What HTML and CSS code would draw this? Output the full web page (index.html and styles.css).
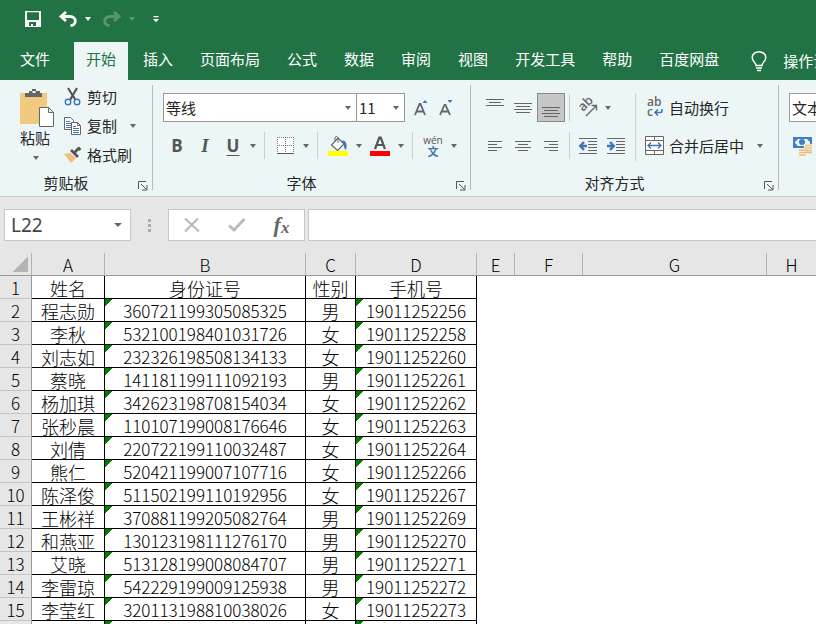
FILE: index.html
```
<!DOCTYPE html>
<html lang="zh-CN">
    <head>
        <meta charset="utf-8">
        <title>工作簿</title>
        <link rel="stylesheet" href="styles.css">
    </head>
    <body>
        <div class="quick">
            <button class="q-save" aria-label="保存">
                <svg width="16" height="16" viewBox="0 0 16 16"><path d="M0 0h16v16H0zM2 1.300v7.700h12V1.300zM4 11v4h2v-2h2v2h3v-4z" fill="#fff" fill-rule="evenodd"/></svg>
            </button>
            <button class="q-undo" aria-label="撤消">
                <svg width="18" height="16" viewBox="0 0 18 16"><path d="M7 1L2 5.500L7 10M2 5.500h9c7 0 7 9 .5 9" fill="none" stroke="#fff" stroke-width="2.800"/></svg>
                <i class="caret"></i>
            </button>
            <button class="q-redo" aria-label="恢复">
                <svg width="18" height="16" viewBox="0 0 18 16"><path d="M11 1l5 4.500L11 10M16 5.500H7c-7 0-7 9-.5 9" fill="none" stroke="#fff" stroke-width="2.800"/></svg>
                <i class="caret"></i>
            </button>
            <button class="q-more" aria-label="自定义">
                <svg width="6" height="7" viewBox="0 0 6 7"><path d="M.5 0h5v1.200h-5zM0 3h6L3 6.200z" fill="#fff"/></svg>
            </button>
        </div>

        <nav class="tabs">
            <a class="file" href="#">文件</a>
            <a class="active" href="#">开始</a>
            <a href="#">插入</a>
            <a href="#">页面布局</a>
            <a href="#">公式</a>
            <a href="#">数据</a>
            <a href="#">审阅</a>
            <a href="#">视图</a>
            <a href="#">开发工具</a>
            <a href="#">帮助</a>
            <a href="#">百度网盘</a>
            <a class="tell" href="#">
                <svg width="16" height="21" viewBox="0 0 16 21"><path d="M5 14.500c0-3-3.800-4-3.800-8a6.800 5.800 0 0 1 13.600 0c0 4-3.800 5-3.800 8zM5 17h6M6 19.500h4" fill="none" stroke="#fff" stroke-width="1.500"/></svg>
                操作说明搜索
            </a>
        </nav>

        <div class="ribbon">
            <!-- 剪贴板 -->
            <section class="group clipboard">
                <div class="tools">
                    <button class="paste">
                        <svg width="34" height="38" viewBox="0 0 34 38"><path d="M0 4h27v31H0z" fill="#f0cb7e"/><path d="M5 4h4V2h3V0h4v2h4v2h2v4H5z" fill="#666"/><path d="M12.500 2h3v2h-3z" fill="#edf6f7"/><path d="M19.500 18.500h9l5 5v14h-14z" fill="#fff" stroke="#666"/><path d="M28.500 18.500v5h5" fill="none" stroke="#666"/></svg>
                        <span>粘贴</span>
                        <i class="caret"></i>
                    </button>
                    <div class="list">
                        <button>
                            <svg width="18" height="18" viewBox="0 0 18 18"><path d="M4 0l7.500 12M13 0L6 12" stroke="#555" stroke-width="2.200"/><g fill="none" stroke="#3f74b5" stroke-width="1.400"><circle cx="4" cy="14" r="2.800"/><circle cx="13" cy="14" r="2.800"/></g></svg>
                            剪切
                        </button>
                        <button>
                            <svg width="18" height="18" viewBox="0 0 18 18"><path d="M.5.500h6l3 3v9h-9z" fill="#fff" stroke="#666"/><path d="M2 4.500h4M2 6.500h5M2 8.500h5M2 10.500h5" stroke="#3f74b5"/><path d="M7.500 5.500h6l3 3v9h-9z" fill="#fff" stroke="#666"/><path d="M13.500 5.500v3h3" fill="none" stroke="#666"/><path d="M9 9.500h3M9 11.500h6M9 13.500h6M9 15.500h6" stroke="#3f74b5"/></svg>
                            复制
                            <i class="caret"></i>
                        </button>
                        <button>
                            <svg width="18" height="18" viewBox="0 0 18 18"><path d="M0 8l6-1 6 5-5 5z" fill="#f0c078"/><path d="M7 4l7 7M15 2l-4 4" stroke="#555" stroke-width="2.800"/><path d="M14 1.500l2.500 2.500" stroke="#555" stroke-width="2.500"/></svg>
                            格式刷
                        </button>
                    </div>
                </div>
                <div class="caption">
                    <span>剪贴板</span>
                    <button aria-label="剪贴板设置"><svg width="10" height="10" viewBox="0 0 10 10"><path d="M.5 8V.500H8M3 3l5.500 5.500M4 9h5V4" fill="none" stroke="#555"/></svg></button>
                </div>
            </section>

            <!-- 字体 -->
            <section class="group font">
                <div class="tools">
                    <div class="row">
                        <label class="combo family"><select aria-label="字体"><option>等线</option></select><i class="caret"></i></label>
                        <label class="combo size"><select aria-label="字号"><option>11</option></select><i class="caret"></i></label>
                        <button class="tool grow" aria-label="增大字号">
                            <svg width="16" height="18" viewBox="0 0 16 18"><path d="M1 16L5.500 5h1L11 16M3 12.500h6" fill="none" stroke="#666" stroke-width="1.800"/><path d="M8.500 4L11 1l2.500 3z" fill="#3f74b5"/></svg>
                        </button>
                        <button class="tool" aria-label="减小字号">
                            <svg width="16" height="18" viewBox="0 0 16 18"><path d="M1 16L5.500 6h1L11 16M3 12.500h6" fill="none" stroke="#666" stroke-width="1.800"/><path d="M8.500 1h5L11 4z" fill="#3f74b5"/></svg>
                        </button>
                    </div>
                    <div class="row">
                        <button class="tool letter bold">B</button>
                        <button class="tool letter italic">I</button>
                        <button class="tool letter under">U</button>
                        <button class="drop" aria-label="下划线样式"><i class="caret"></i></button>
                        <i class="sep"></i>
                        <button class="tool wide" aria-label="边框">
                            <svg width="17" height="17" viewBox="0 0 17 17"><path d="M0 0h17v17H0z" fill="#fff"/><path d="M0 .5h17M0 8.500h17M.5 0v16M8.500 0v16M16.500 0v16" stroke="#777" stroke-dasharray="1 1"/><path d="M0 16.500h17" stroke="#555"/></svg>
                        </button>
                        <button class="drop" aria-label="边框样式"><i class="caret"></i></button>
                        <i class="sep"></i>
                        <button class="tool wide" aria-label="填充颜色">
                            <svg width="20" height="20" viewBox="0 0 20 20"><path d="M10 2l6 6-6.500 6.500L3.500 9z" fill="#fff" stroke="#666" stroke-width="1.200"/><path d="M7 5V1.500Q8.500-.5 10 1.500V7" fill="none" stroke="#666"/><path d="M13.500 4.500c5-.5 6 4 4.500 9.500-1.500-1-2.500-3-2-6z" fill="#3f74b5"/><path d="M0 15h20v5H0z" fill="#ff0"/></svg>
                        </button>
                        <button class="drop" aria-label="选择填充颜色"><i class="caret"></i></button>
                        <button class="tool wide" aria-label="字体颜色">
                            <svg width="20" height="20" viewBox="0 0 20 20"><path d="M5 13L9.300 1.500h1.400L15 13M6.500 9h7" fill="none" stroke="#555" stroke-width="2.200"/><path d="M0 15h20v5H0z" fill="#f00"/></svg>
                        </button>
                        <button class="drop" aria-label="选择字体颜色"><i class="caret"></i></button>
                        <i class="sep"></i>
                        <button class="tool wide pinyin"><span>wén</span><b>文</b></button>
                        <button class="drop" aria-label="拼音选项"><i class="caret"></i></button>
                    </div>
                </div>
                <div class="caption">
                    <span>字体</span>
                    <button aria-label="字体设置"><svg width="10" height="10" viewBox="0 0 10 10"><path d="M.5 8V.500H8M3 3l5.500 5.500M4 9h5V4" fill="none" stroke="#555"/></svg></button>
                </div>
            </section>

            <!-- 对齐方式 -->
            <section class="group align">
                <div class="tools">
                    <div class="left">
                        <div class="row">
                            <button class="tool" aria-label="顶端对齐"><svg width="18" height="18" viewBox="0 0 18 18"><path d="M0 .500h18M3 3.500h12M0 6.500h18" stroke="#666"/></svg></button>
                            <button class="tool" aria-label="垂直居中"><svg width="18" height="18" viewBox="0 0 18 18"><path d="M0 4.500h18M2 7.500h14M0 10.500h18M2 13.500h14" stroke="#666"/></svg></button>
                            <button class="tool on" aria-label="底端对齐"><svg width="18" height="18" viewBox="0 0 18 18"><path d="M0 8.500h18M2 11.500h14M0 14.500h18M2 17.500h14" stroke="#666"/></svg></button>
                            <i class="sep"></i>
                            <button class="tool" aria-label="方向"><svg width="20" height="20" viewBox="0 0 20 20"><text x="0" y="0" transform="translate(5 14) rotate(-45)" font-size="13" font-weight="600" fill="#666">ab</text><path d="M8 18L18 8M13.500 7.500h5v5" fill="none" stroke="#666" stroke-width="1.400"/></svg></button>
                            <button class="drop" aria-label="方向选项"><i class="caret"></i></button>
                        </div>
                        <div class="row">
                            <button class="tool" aria-label="左对齐"><svg width="14" height="12" viewBox="0 0 14 12"><path d="M0 1.500h14M0 4.500h9M0 7.500h14M0 10.500h9" stroke="#666"/></svg></button>
                            <button class="tool" aria-label="居中"><svg width="16" height="12" viewBox="0 0 16 12"><path d="M0 1.500h16M3 4.500h10M0 7.500h16M3 10.500h10" stroke="#666"/></svg></button>
                            <button class="tool" aria-label="右对齐"><svg width="14" height="12" viewBox="0 0 14 12"><path d="M0 1.500h14M5 4.500h9M0 7.500h14M5 10.500h9" stroke="#666"/></svg></button>
                            <i class="sep"></i>
                            <button class="tool" aria-label="减少缩进"><svg width="18" height="16" viewBox="0 0 18 16"><path d="M0 .5h18M9 3.500h9M9 6.500h9M9 9.500h9M9 12.500h9M0 15.500h18" stroke="#666"/><path d="M8 8H2M5 4L1.200 8 5 12" fill="none" stroke="#3f74b5" stroke-width="2.400"/></svg></button>
                            <button class="tool" aria-label="增加缩进"><svg width="18" height="16" viewBox="0 0 18 16"><path d="M0 .5h18M9 3.500h9M9 6.500h9M9 9.500h9M9 12.500h9M0 15.500h18" stroke="#666"/><path d="M0 8h6M3 4l3.800 4L3 12" fill="none" stroke="#3f74b5" stroke-width="2.400"/></svg></button>
                        </div>
                    </div>
                    <i class="sep tall"></i>
                    <div class="right">
                        <button class="row wrap">
                            <svg width="20" height="20" viewBox="0 0 20 20"><text x="2" y="8" font-size="12" font-weight="600" fill="#666">ab</text><text x="2" y="18" font-size="12" font-weight="600" fill="#666">c</text><path d="M17 11v2q0 1.500-1.500 1.500H10M13 11.500l-3 3 3 3" fill="none" stroke="#3f74b5" stroke-width="1.600"/></svg>
                            自动换行
                        </button>
                        <button class="row">
                            <svg width="20" height="20" viewBox="0 0 20 20"><path d="M.5.500h18v18H.5z" fill="#fff" stroke="#666"/><path d="M0 4.500h19M0 14.500h19M9.500 0v4M9.500 15v4" stroke="#666"/><path d="M3 9.500h13M6 6.500l-3 3 3 3M13 6.500l3 3-3 3" fill="none" stroke="#3f74b5" stroke-width="1.300"/></svg>
                            合并后居中
                            <i class="caret"></i>
                        </button>
                    </div>
                </div>
                <div class="caption">
                    <span>对齐方式</span>
                    <button aria-label="对齐设置"><svg width="10" height="10" viewBox="0 0 10 10"><path d="M.5 8V.500H8M3 3l5.500 5.500M4 9h5V4" fill="none" stroke="#555"/></svg></button>
                </div>
            </section>

            <!-- 数字 -->
            <section class="group number">
                <div class="tools">
                    <div class="row">
                        <label class="combo format"><select aria-label="数字格式"><option>文本</option></select></label>
                    </div>
                    <div class="row">
                        <button class="tool money" aria-label="会计数字格式"><svg width="20" height="20" viewBox="0 0 20 20"><path d="M0 1h19v11H0z" fill="#3f7fc1"/><path d="M2 3h15v7H2z" fill="#edf6f7"/><path d="M2 3h3L2 6zM17 3h-3l3 3zM2 10h3L2 7z" fill="#3f7fc1"/><circle cx="9" cy="6" r="3" fill="#3f7fc1"/><path d="M11 8h8v10h-4v2H6v-7h5z" fill="#edf6f7"/><path d="M12 9.500h7M12 12h7M12 14.500h7M6 14h7M6 16.500h13M6 19h7" stroke="#efbd74" stroke-width="1.700"/></svg></button>
                    </div>
                </div>
            </section>
        </div>

        <div class="formula">
            <label class="name"><input type="text" value="L22" aria-label="名称框"><i class="caret"></i></label>
            <svg class="dots" width="3" height="13" viewBox="0 0 3 13"><path d="M0 0h3v3H0zM0 5h3v3H0zM0 10h3v3H0z" fill="#aaa"/></svg>
            <div class="actions">
                <button aria-label="取消"><svg width="16" height="14" viewBox="0 0 16 14"><path d="M1 .5l14 13M14 .5L1 13.500" stroke="#bbb" stroke-width="2.200"/></svg></button>
                <button aria-label="输入"><svg width="18" height="14" viewBox="0 0 18 14"><path d="M1 7.500l5 4.500L16.500 1" fill="none" stroke="#bbb" stroke-width="3"/></svg></button>
                <button class="fx" aria-label="插入函数"><em>f</em><em class="x">x</em></button>
            </div>
            <input class="edit" type="text" aria-label="编辑栏">
        </div>

        <table class="sheet">
            <colgroup>
                <col class="c-no"><col class="c-a"><col class="c-b"><col class="c-c"><col class="c-d"><col class="c-e"><col class="c-f"><col class="c-g"><col>
            </colgroup>
            <thead>
                <tr><th class="corner"></th><th>A</th><th>B</th><th>C</th><th>D</th><th>E</th><th>F</th><th>G</th><th>H</th></tr>
            </thead>
            <tbody>
                <tr><th>1</th><td>姓名</td><td>身份证号</td><td>性别</td><td>手机号</td></tr>
                <tr><th>2</th><td>程志勋</td><td class="t">360721199305085325</td><td>男</td><td class="t">19011252256</td></tr>
                <tr><th>3</th><td>李秋</td><td class="t">532100198401031726</td><td>女</td><td class="t">19011252258</td></tr>
                <tr><th>4</th><td>刘志如</td><td class="t">232326198508134133</td><td>女</td><td class="t">19011252260</td></tr>
                <tr><th>5</th><td>蔡晓</td><td class="t">141181199111092193</td><td>男</td><td class="t">19011252261</td></tr>
                <tr><th>6</th><td>杨加琪</td><td class="t">342623198708154034</td><td>女</td><td class="t">19011252262</td></tr>
                <tr><th>7</th><td>张秒晨</td><td class="t">110107199008176646</td><td>女</td><td class="t">19011252263</td></tr>
                <tr><th>8</th><td>刘倩</td><td class="t">220722199110032487</td><td>女</td><td class="t">19011252264</td></tr>
                <tr><th>9</th><td>熊仁</td><td class="t">520421199007107716</td><td>女</td><td class="t">19011252266</td></tr>
                <tr><th>10</th><td>陈泽俊</td><td class="t">511502199110192956</td><td>女</td><td class="t">19011252267</td></tr>
                <tr><th>11</th><td>王彬祥</td><td class="t">370881199205082764</td><td>男</td><td class="t">19011252269</td></tr>
                <tr><th>12</th><td>和燕亚</td><td class="t">130123198111276170</td><td>男</td><td class="t">19011252270</td></tr>
                <tr><th>13</th><td>艾晓</td><td class="t">513128199008084707</td><td>男</td><td class="t">19011252271</td></tr>
                <tr><th>14</th><td>李雷琼</td><td class="t">542229199009125938</td><td>男</td><td class="t">19011252272</td></tr>
                <tr><th>15</th><td>李莹红</td><td class="t">320113198810038026</td><td>女</td><td class="t">19011252273</td></tr>
                <tr><th></th><td></td><td class="t"></td><td></td><td class="t"></td></tr>
            </tbody>
        </table>
    </body>
</html>
```
FILE: styles.css
```
*{
    box-sizing:border-box;
}
body{
    margin:0;
    height:100vh;
    overflow:hidden;
    background:#fff;
    color:#262626;
    font:15px/20px "Noto Sans CJK SC",sans-serif;
}
button,input,select{
    margin:0;
    padding:0;
    border:0;
    background:none;
    color:inherit;
    font:inherit;
    appearance:none;
    border-radius:0;
}
button{
    display:flex;
    align-items:center;
    white-space:nowrap;
}
svg{
    display:block;
    flex:none;
    overflow:visible;
}
a{
    color:inherit;
    text-decoration:none;
}
.caret{
    flex:none;
    border:3px solid transparent;
    border-top:4px solid #666;
    border-bottom:0;
}

/* 标题栏 */
.quick{
    display:flex;
    height:42px;
    padding:0 25px;
    background:#217346;
}
.quick button{
    height:38px;
}
.quick .caret{
    margin-left:8px;
    border-top-color:#fff;
}
.q-undo,.q-redo{
    margin-left:18px;
}
.q-redo{
    margin-left:12px;
    opacity:.25;
}
.q-more{
    margin-left:18px;
}

/* 选项卡 */
.tabs{
    display:flex;
    gap:3px;
    height:38px;
    background:#217346;
    color:#fff;
    line-height:34px;
    white-space:nowrap;
    overflow:hidden;
}
.tabs a{
    flex:none;
    padding:0 12px;
}
.tabs .file{
    padding:0 21px 0 20px;
}
.tabs .active{
    background:#edf6f7;
    color:#217346;
}
.tabs .tell{
    display:flex;
    align-items:center;
    gap:16px;
    padding-left:17px;
}

/* 功能区 */
.ribbon{
    display:flex;
    height:117px;
    padding:5px 0 6px;
    background:#edf6f7;
    border-bottom:1px solid #d0cdd0;
    overflow:hidden;
}
.group{
    display:flex;
    flex:none;
    flex-direction:column;
    justify-content:space-between;
    border-right:1px solid #b8b8bc;
}
.caption{
    display:flex;
    align-items:center;
    height:14px;
}
.caption span{
    flex:1;
    text-align:center;
}
.caption button{
    width:20px;
    padding:5px 0 0 6px;
}
.clipboard{
    width:153px;
}
.clipboard .tools{
    display:flex;
    gap:10px;
    padding-left:20px;
}
.paste{
    flex-direction:column;
    align-items:flex-start;
    justify-content:flex-start;
    padding-top:4px;
}
.paste span{
    margin:1px 0 8px;
}
.paste .caret{
    margin-left:13px;
}
.list{
    margin-top:-3px;
}
.list button{
    height:29px;
    gap:5px;
}
.list .caret{
    margin-left:8px;
}
.font .tools,.number .tools,.left,.right{
    display:flex;
    flex-direction:column;
    gap:9px;
}
.font{
    width:318px;
}
.font .tools,.number .tools{
    padding:8px 10px 0;
}
.row{
    display:flex;
    align-items:center;
    height:29px;
}
.combo{
    display:flex;
    flex:none;
    align-items:center;
    height:29px;
    padding-right:5px;
    background:#fff;
    border:1px solid #999;
}
.combo select{
    flex:1;
    min-width:0;
    padding-left:2px;
}
.family{
    width:194px;
}
.size{
    width:49px;
    margin-left:-1px;
}
.format{
    width:120px;
}
.grow{
    margin-left:4px;
}
.tool{
    justify-content:center;
    width:28px;
    height:29px;
}
.wide{
    width:30px;
}
.on{
    background:#c6c6c6;
    border:1px solid #8a8a8a;
}
.drop{
    justify-content:center;
    width:12px;
    height:29px;
}
.sep{
    width:1px;
    height:27px;
    margin:0 5px;
    background:#d0d0d4;
}
.letter{
    color:#555;
    font:bold 17px/20px "Open Sans",sans-serif;
}
.italic{
    font-family:"Liberation Serif",serif;
    font-style:italic;
    font-size:19px;
}
.under{
    text-decoration:underline;
    text-decoration-thickness:1px;
    text-underline-offset:3px;
}
.pinyin{
    flex-direction:column;
    color:#555;
    font:10px/10px "Open Sans",sans-serif;
}
.pinyin b{
    color:#3f74b5;
    font:bold 11px/12px "Noto Sans CJK SC",sans-serif;
}
.align{
    width:308px;
}
.align .tools{
    display:flex;
    padding:8px 0 0 10px;
}
.align .row .sep{
    margin:0 4px;
}
.align text{
    font-family:"Open Sans",sans-serif;
}
.tall{
    height:68px;
}
.right{
    padding-left:4px;
}
.right .row{
    gap:4px;
}
.right .caret{
    margin-left:9px;
}
.money{
    justify-content:flex-start;
    padding-left:4px;
}

/* 编辑栏 */
.formula{
    display:flex;
    align-items:center;
    height:56px;
    padding:0 0 0 4px;
    background:#e6e6e6;
}
.name,.actions,.edit{
    height:32px;
    background:#fff;
    border:1px solid #c6c6c6;
}
.name{
    display:flex;
    align-items:center;
    width:127px;
    padding:0 8px 0 6px;
}
.name input{
    flex:1;
    min-width:0;
    height:28px;
    color:#444;
    font:19px/24px "Noto Sans",sans-serif;
}
.name .caret,.dots{
    flex:none;
}
.name .caret{
    border-width:4px 4px 0;
}
.dots{
    margin:0 17px;
}
.actions{
    display:flex;
    width:137px;
    margin-right:3px;
}
.actions button{
    flex:1;
    justify-content:center;
}
.fx{
    color:#666;
    font:bold 22px/22px "Liberation Serif",serif;
}
.fx .x{
    padding-top:5px;
    font-size:17px;
}
.edit{
    flex:1;
    min-width:0;
    border-right:0;
}

/* 工作表 */
.sheet{
    width:100%;
    table-layout:fixed;
    border-collapse:separate;
    border-spacing:0;
    color:#000;
    font:17px/20px "Noto Sans CJK SC",sans-serif;
}
.c-no{ width:32px; }
.c-a{ width:73px; }
.c-b{ width:201px; }
.c-c{ width:50px; }
.c-d{ width:121px; }
.c-e{ width:38px; }
.c-f{ width:68px; }
.c-g{ width:184px; }
.sheet th,.sheet td{
    height:23px;
    padding:1px 0 0;
    font-weight:300;
    text-align:center;
    white-space:nowrap;
    border-right:1px solid #000;
    border-bottom:1px solid #000;
}
.sheet td{
    font-size:18px;
}
.sheet .t{
    font-size:17px;
    background:linear-gradient(135deg,#008000 50%,transparent 50%) 0 0/14px 14px no-repeat;
    background-size:8px 8px;
}
.sheet th{
    background:#e6e6e6;
    border-color:#c4c4c4;
    border-right-color:#999;
}
.sheet thead th{
    padding-top:2px;
    border-bottom-color:#999;
    border-right-color:#b4b4b4;
}
.sheet thead th:last-child{
    border-right:0;
}
.sheet .corner{
    background:linear-gradient(135deg,transparent 50%,#b4b4b4 50%) 13px 4px/15px 15px no-repeat #e6e6e6;
}
```
